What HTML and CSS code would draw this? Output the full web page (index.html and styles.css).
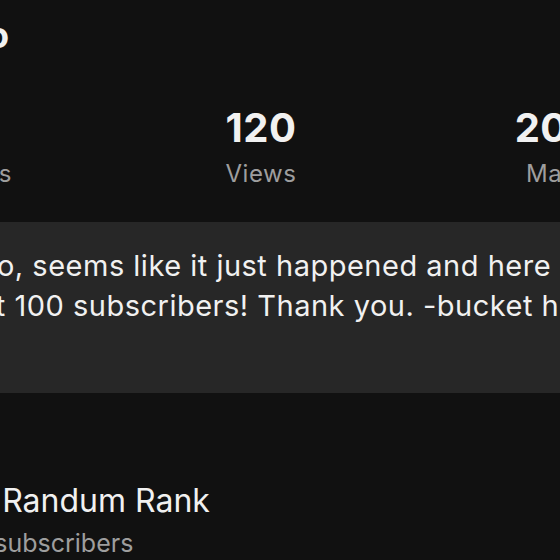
FILE: index.html
```html
<!DOCTYPE html>
<html lang="en">

<head>
  <meta charset="UTF-8">
  <meta name="viewport" content="width=device-width, initial-scale=1.0">
  <title>Channel Info</title>
  <link rel="stylesheet" href="styles.css">
</head>

<body>
  <main class="screen">
    <h1 class="title">Info</h1>

    <div class="stats">
      <div class="stat">
        <div class="num">3</div>
        <div class="label">Uploads</div>
      </div>
      <div class="stat">
        <div class="num">120</div>
        <div class="label">Views</div>
      </div>
      <div class="stat">
        <div class="num">2011</div>
        <div class="label">Made</div>
      </div>
    </div>

    <!-- latest community post -->
    <section class="post">
      <p class="post-text">Yo, seems like it just happened and here we are<br>at 100 subscribers! Thank you. -bucket hop</p>
    </section>

    <div class="channel">
      <div class="name">Pal Randum Rank</div>
      <div class="subs">102 subscribers</div>
    </div>
  </main>
</body>

</html>
```

FILE: styles.css
```css
html,
body {
  margin: 0;
  height: 100%;
  overflow: hidden;
}

body {
  background-color: #111111;
  color: #f1f1f1;
  font-family: Inter, "Noto Sans", sans-serif;
}

.screen {
  display: flex;
  flex-direction: column;
  padding-top: 13px;
}

.title {
  margin: 0 0 0 -59px;
  font-size: 36px;
  line-height: 44px;
  font-weight: 700;
  white-space: nowrap;
}

.stats {
  display: flex;
  margin-top: 49px;
  margin-left: -186px;
}

.stat {
  flex: none;
  width: 298px;
  display: flex;
  flex-direction: column;
  align-items: center;
  gap: 9px;
}

.num {
  font-size: 40px;
  line-height: 44px;
  font-weight: 700;
  letter-spacing: 0.5px;
}

.label {
  font-size: 24px;
  line-height: 30px;
  letter-spacing: 0.6px;
  color: #9e9e9e;
}

.post {
  margin-top: 33px;
  height: 171px;
  box-sizing: border-box;
  padding-top: 24px;
  background-color: #272727;
  overflow: hidden;
}

.post-text {
  margin: 0 0 0 -21px;
  font-size: 29px;
  line-height: 40px;
  letter-spacing: 0.5px;
  white-space: nowrap;
}

.channel {
  display: flex;
  flex-direction: column;
  gap: 8px;
  margin-top: 89px;
}

.name {
  margin-left: -53px;
  font-size: 32px;
  line-height: 38px;
  white-space: nowrap;
}

.subs {
  margin-left: -54px;
  font-size: 25px;
  line-height: 30px;
  color: #9e9e9e;
  white-space: nowrap;
}
```
